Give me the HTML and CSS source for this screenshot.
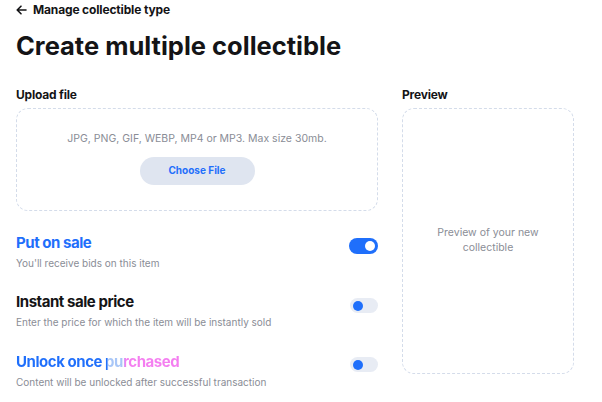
FILE: index.html
```html
<!DOCTYPE html>
<html>
<head>
<meta charset="utf-8">
<link rel="stylesheet" href="styles.css">
</head>
<body>
<div class="page">
  <a class="back" href="#"><svg class="arrow" width="11" height="10" viewBox="0 0 11 10"><path d="M10 5H1.5M5 1.2L1.2 5L5 8.8" fill="none" stroke="#141416" stroke-width="1.6" stroke-linecap="round" stroke-linejoin="round"/></svg>Manage collectible type</a>
  <h1 class="title">Create multiple collectible</h1>
  <div class="layout">
    <div class="main">
      <div class="label">Upload file</div>
      <div class="upload">
        <p class="upload-note">JPG, PNG, GIF, WEBP, MP4 or MP3. Max size 30mb.</p>
        <button class="choose">Choose File</button>
      </div>
      <div class="option">
        <div class="option-text">
          <div class="option-title blue">Put on sale</div>
          <div class="option-sub">You'll receive bids on this item</div>
        </div>
        <span class="toggle on"><span class="knob"></span></span>
      </div>
      <div class="option">
        <div class="option-text">
          <div class="option-title">Instant sale price</div>
          <div class="option-sub">Enter the price for which the item will be instantly sold</div>
        </div>
        <span class="toggle off"><span class="knob"></span></span>
      </div>
      <div class="option">
        <div class="option-text">
          <div class="option-title gradient">Unlock once purchased</div>
          <div class="option-sub">Content will be unlocked after successful transaction</div>
        </div>
        <span class="toggle off"><span class="knob"></span></span>
      </div>
    </div>
    <div class="side">
      <div class="label">Preview</div>
      <div class="preview">
        <p class="preview-note">Preview of your new<br>collectible</p>
      </div>
    </div>
  </div>
</div>
</body>
</html>
```

FILE: styles.css
```css
* { box-sizing: border-box; }
html, body { margin: 0; padding: 0; background: #fff; }
body { font-family: "Inter", "DejaVu Sans", sans-serif; color: #141416; }

.page { padding: 3px 28px 0 16px; }

.back {
  display: flex;
  align-items: center;
  gap: 6px;
  font-size: 12px;
  font-weight: 700;
  line-height: 14px;
  color: #141416;
  text-decoration: none;
  letter-spacing: -0.15px;
}
.arrow { display: block; }

.title {
  margin: 14px 0 0;
  font-size: 25.5px;
  line-height: 30px;
  font-weight: 700;
  letter-spacing: 0;
}

.layout { display: flex; gap: 24px; margin-top: 26px; }
.main { width: 362px; }
.side { width: 172px; }

.label {
  font-size: 12px;
  font-weight: 700;
  line-height: 16px;
  letter-spacing: -0.2px;
}

.upload {
  margin-top: 5px;
  height: 103px;
  border: 1px dashed #d4dcea;
  border-radius: 12px;
  display: flex;
  flex-direction: column;
  align-items: center;
}
.upload-note {
  margin: 23px 0 0;
  font-size: 10.5px;
  line-height: 14px;
  color: #8a8d96;
}
.choose {
  margin-top: 11px;
  width: 115px;
  height: 28px;
  border: 0;
  border-radius: 14px;
  background: #dfe5f0;
  color: #1f6ffb;
  font-family: inherit;
  font-size: 10px;
  font-weight: 700;
  padding: 0 0 2px;
}

.option {
  display: flex;
  align-items: flex-start;
  justify-content: space-between;
  margin-top: 22px;
}
.option-title {
  font-size: 15px;
  line-height: 20px;
  font-weight: 700;
  letter-spacing: -0.45px;
}
.option-title.blue { color: #1f6ffb; }
.option-title.gradient {
  display: inline-block;
  background: linear-gradient(90deg, #1f6ffb 0%, #1f6ffb 55.5%, #a8c6f7 56.5%, #a8c6f7 66%, #f47ef0 67%, #f47ef0 100%);
  -webkit-background-clip: text;
  background-clip: text;
  color: transparent;
}
.option-sub {
  margin-top: 3px;
  font-size: 10px;
  line-height: 14px;
  color: #8a8d96;
}

.toggle {
  display: flex;
  align-items: center;
  width: 29px;
  height: 16px;
  border-radius: 8px;
  margin-top: 5px;
  flex-shrink: 0;
}
.toggle.on { background: #1f6ffb; justify-content: flex-end; padding: 0 3px; }
.toggle.on .knob { width: 10px; height: 10px; border-radius: 50%; background: #fff; }
.toggle.off { background: #e8ecf4; padding: 0 3px; width: 28px; height: 15px; margin-top: 6px; }
.toggle.off .knob { width: 10px; height: 10px; border-radius: 50%; background: #1f6ffb; }

.preview {
  margin-top: 5px;
  height: 266px;
  border: 1px dashed #d4dcea;
  border-radius: 12px;
  display: flex;
  align-items: center;
  justify-content: center;
}
.preview-note {
  margin: 0 0 2px;
  text-align: center;
  font-size: 10.5px;
  line-height: 15px;
  color: #8a8d96;
}
```
